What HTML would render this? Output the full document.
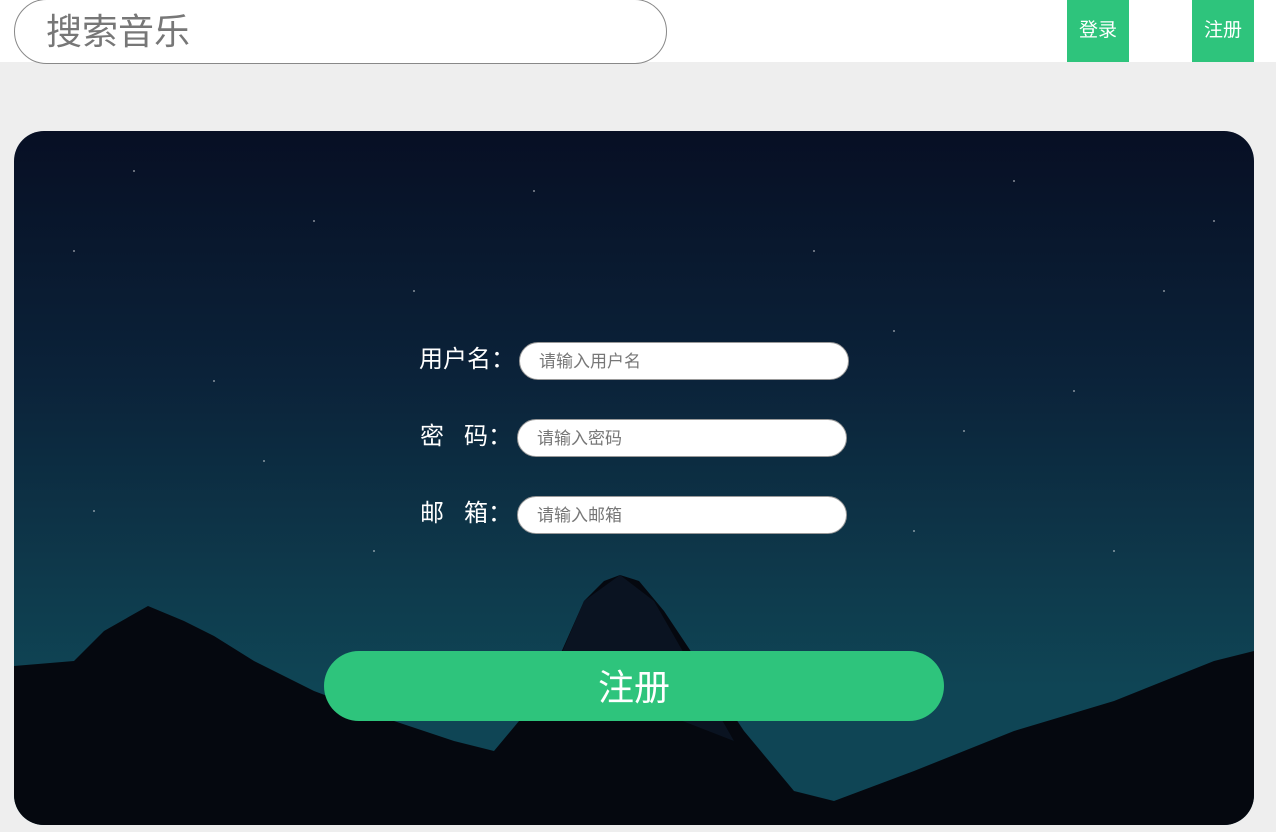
<!DOCTYPE html>
<html><head><meta charset="utf-8"><style>
*{margin:0;padding:0;box-sizing:border-box}
body{width:1276px;height:832px;background:#eeeeee;font-family:"Liberation Sans","Noto Sans CJK SC",sans-serif;position:relative;overflow:hidden}
.hdr{position:absolute;left:0;top:0;width:1276px;height:62px;background:#fff}
.search{position:absolute;left:14px;top:-1px;width:653px;height:65px;border:1px solid #888;border-radius:33px;background:#fff;font-size:36px;color:#777;padding-left:31px;line-height:64px}
.btn{position:absolute;top:0;width:62px;height:62px;background:#2ec47c;color:#fff;font-size:19px;line-height:62px;text-align:center}
.card{position:absolute;left:14px;top:131px;width:1240px;height:694px;border-radius:30px;overflow:hidden;background:linear-gradient(180deg,#070f24 0%,#0b2239 35%,#0e3a4c 65%,#0f4555 80%)}
.card svg{position:absolute;left:0;top:0}
.lbl{position:absolute;color:#fff;font-size:24px;line-height:30px}
.inp{position:absolute;height:38px;width:330px;background:#fff;border:1px solid #999;border-radius:19px;font-size:17px;color:#777;line-height:38px;padding-left:19px}
.sub{position:absolute;left:324px;top:651px;width:620px;height:70px;border-radius:35px;background:#2ec47c;color:#fff;font-size:36px;line-height:74px;text-align:center}
</style></head><body>
<div class="hdr"></div>
<div class="search">搜索音乐</div>
<div class="btn" style="left:1067px">登录</div>
<div class="btn" style="left:1192px">注册</div>
<div class="card">
<svg width="1240" height="694" viewBox="0 0 1240 694">
<g fill="#ffffff" opacity="0.5">
<circle cx="120" cy="40" r="1"/><circle cx="300" cy="90" r="1"/><circle cx="520" cy="60" r="1"/><circle cx="800" cy="120" r="1"/><circle cx="1000" cy="50" r="1"/><circle cx="1150" cy="160" r="1"/><circle cx="200" cy="250" r="1"/><circle cx="950" cy="300" r="1"/><circle cx="700" cy="220" r="1"/><circle cx="80" cy="380" r="1"/><circle cx="1100" cy="420" r="1"/><circle cx="400" cy="160" r="1"/>
<circle cx="60" cy="120" r="1"/><circle cx="250" cy="330" r="1"/><circle cx="640" cy="300" r="1"/><circle cx="880" cy="200" r="1"/><circle cx="1200" cy="90" r="1"/><circle cx="1060" cy="260" r="1"/><circle cx="360" cy="420" r="1"/><circle cx="900" cy="400" r="1"/>
</g>
<path d="M0 535 L60 530 L90 500 L134 475 L170 490 L200 505 L240 530 L300 560 L380 590 L440 610 L480 620 L530 560 L570 470 L590 450 L606 444 L625 450 L650 480 L690 540 L730 600 L780 660 L820 670 L900 640 L1000 600 L1100 570 L1200 530 L1240 520 L1240 694 L0 694 Z" fill="#05080f"/>
<path d="M540 540 L570 470 L606 444 L640 470 L680 540 L720 610 Z" fill="#0b1626" opacity="0.8"/>
</svg>
</div>
<div class="lbl" style="left:419px;top:345px">用户名：</div>
<div class="inp" style="left:519px;top:342px">请输入用户名</div>
<div class="lbl" style="left:420px;top:422px">密&nbsp;&nbsp;&nbsp;码：</div>
<div class="inp" style="left:517px;top:419px">请输入密码</div>
<div class="lbl" style="left:420px;top:499px">邮&nbsp;&nbsp;&nbsp;箱：</div>
<div class="inp" style="left:517px;top:496px">请输入邮箱</div>
<div class="sub">注册</div>
</body></html>
